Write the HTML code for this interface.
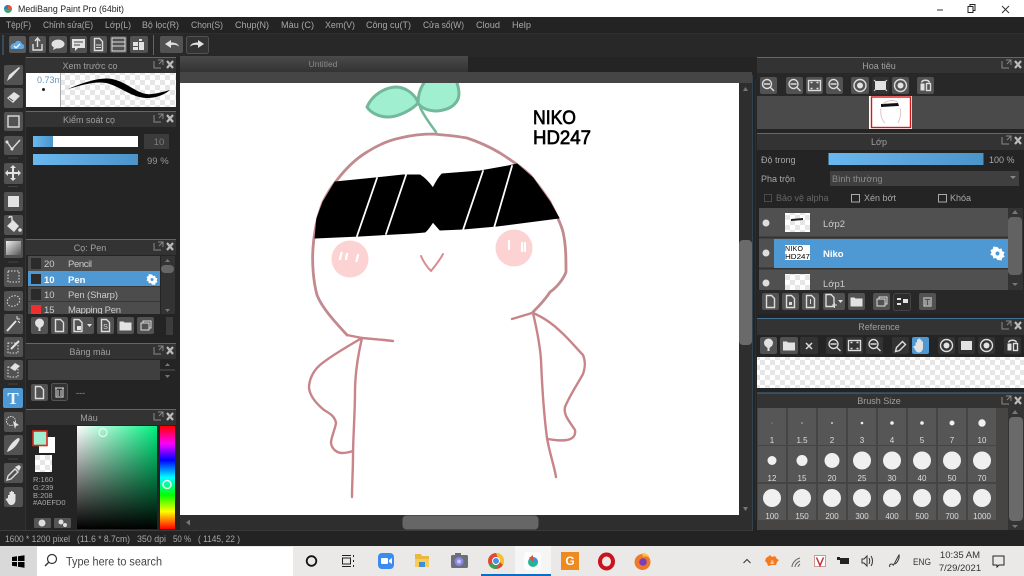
<!DOCTYPE html>
<html><head><meta charset="utf-8"><title>MediBang Paint Pro</title>
<style>
html,body{margin:0;padding:0;width:1024px;height:576px;overflow:hidden;background:#222}
svg{display:block;font-family:"Liberation Sans","Noto Sans CJK SC",sans-serif}
text{fill:#a8a8a8;font-size:9px}
.h{text-anchor:middle;fill:#a0a0a0;font-size:9px}
.b{fill:#525252}
.i{fill:none;stroke:#ddd;stroke-width:1.4}
.f{fill:#e2e2e2}
.n{text-anchor:middle;fill:#ddd;font-size:8px}
.c{fill:#f0f0f0}
.cell{fill:#565656}
</style></head><body>
<svg width="1024" height="576" viewBox="0 0 1024 576" xmlns="http://www.w3.org/2000/svg">
<defs>
<pattern id="ck" width="10" height="10" patternUnits="userSpaceOnUse"><rect width="10" height="10" fill="#fff"/><rect width="5" height="5" fill="#e6e6e6"/><rect x="5" y="5" width="5" height="5" fill="#e6e6e6"/></pattern>
<linearGradient id="bar" x1="0" x2="1"><stop offset="0" stop-color="#6ab8f0"/><stop offset="1" stop-color="#4a94c8"/></linearGradient>
<linearGradient id="sg" x1="0" x2="1"><stop offset="0" stop-color="#fff"/><stop offset="1" stop-color="#00f080"/></linearGradient>
<linearGradient id="sk" x1="0" x2="0" y1="0" y2="1"><stop offset="0" stop-color="#000" stop-opacity="0"/><stop offset="1" stop-color="#000"/></linearGradient>
<linearGradient id="hue" x1="0" x2="0" y1="0" y2="1"><stop offset="0" stop-color="#f00"/><stop offset=".17" stop-color="#f0f"/><stop offset=".33" stop-color="#00f"/><stop offset=".5" stop-color="#0ff"/><stop offset=".67" stop-color="#0f0"/><stop offset=".83" stop-color="#ff0"/><stop offset="1" stop-color="#f00"/></linearGradient>
<linearGradient id="gr" x1="0" x2="1" y1="0" y2="1"><stop offset="0" stop-color="#eee"/><stop offset="1" stop-color="#555"/></linearGradient>
<linearGradient id="tab" x1="0" x2="0" y1="0" y2="1"><stop offset="0" stop-color="#4a4a4a"/><stop offset="1" stop-color="#333"/></linearGradient>
<clipPath id="cv"><rect x="180" y="83" width="559" height="432"/></clipPath>
<clipPath id="lc"><rect x="759" y="208" width="249" height="82"/></clipPath>
<clipPath id="bc"><rect x="28" y="256" width="132" height="58"/></clipPath>
<clipPath id="pc"><rect x="26" y="73" width="34" height="34"/></clipPath>
<g id="hd"><path d="M-10-4v7h7M-6-5h5v5M-1-5L-5-1" fill="none" stroke="#888" stroke-width="1"/><path d="M3-4L9 3M9-4L3 3" stroke="#bbb" stroke-width="2.2"/></g>
<g id="doc"><path d="M-4-6h5l3 3v9h-8z" class="i"/></g>
<g id="mg"><circle cx="-1" cy="-1" r="4.500" class="i"/><path d="M2-1h-6M2 2l4 4" class="i"/></g>
<g id="fit"><rect x="-6" y="-5" width="12" height="10" class="i"/><path d="M-4-3h2M2-3h2M-4 3h2M2 3h2" class="i"/></g>
<g id="rot"><circle r="6" class="i"/><circle r="3" class="f"/></g>
<g id="cup"><circle cy="-2" r="4.500" class="f"/><path d="M-1 0h2v6h-2z" class="f"/><path d="M-4 0l4 4 4-4z" class="f"/></g>
<g id="fold"><path d="M-6-4h4l1 1h7v8h-12z" class="f"/></g>
<g id="hand"><path d="M-5 0v-3h1.500v2-5h1.500v5-6h1.500v6-5h1.500v5-3h1.500v6c0 3-2 5-4 5s-3-1-4-3l-2-3z" class="f"/></g>
<g id="flip"><rect x="-5" y="-2" width="4" height="7" class="f"/><rect x="1" y="-2" width="4" height="7" class="i"/><path d="M-4-3c1-3 7-3 8 0" class="i"/></g>
<g id="pipet"><path d="M-5 6l1-4 6-6 3 3-6 6z" class="i"/></g>
<g id="tg"><path d="M0-5l1.200 1.500 2-.3.400 2 1.900.8-.9 1.800.9 1.800-1.900.8-.4 2-2-.3L0 5l-1.200-1.500-2 .3-.4-2-1.900-.8.9-1.800-.9-1.800 1.900-.8.4-2 2 .3z" fill="#fff"/><circle r="1.500" fill="#4e99d4"/></g>
</defs>

<!-- title bar -->
<rect width="1024" height="17" fill="#fff"/>
<circle cx="8" cy="9" r="4" fill="#3aa56f"/><path d="M8 5a4 4 0 0 1 4 4H8z" fill="#e8553f"/><path d="M4 9a4 4 0 0 1 4-4v4z" fill="#2d7fc0"/>
<text x="18" y="12" style="font-size:9.500px;fill:#222" textLength="106" lengthAdjust="spacingAndGlyphs">MediBang Paint Pro (64bit)</text>
<path d="M937 10h6" stroke="#333"/><rect x="968" y="6.500" width="5" height="6" fill="none" stroke="#222"/><path d="M970 6v-1.500h5v6h-2" fill="none" stroke="#222"/>
<path d="M1002 6l7 7M1009 6l-7 7" stroke="#333"/>

<!-- menu + toolbar -->
<rect y="17" width="1024" height="16" fill="#232323"/>
<rect y="33" width="1024" height="1" fill="#2e2e2e"/>
<rect y="34" width="1024" height="23" fill="#282828"/>
<g style="font-size:9px">
<text x="6" y="28" textLength="25" lengthAdjust="spacingAndGlyphs">Tệp(F)</text>
<text x="43" y="28" textLength="50" lengthAdjust="spacingAndGlyphs">Chỉnh sửa(E)</text>
<text x="105" y="28" textLength="26" lengthAdjust="spacingAndGlyphs">Lớp(L)</text>
<text x="142" y="28" textLength="37" lengthAdjust="spacingAndGlyphs">Bộ lọc(R)</text>
<text x="191" y="28" textLength="32" lengthAdjust="spacingAndGlyphs">Chọn(S)</text>
<text x="235" y="28" textLength="34" lengthAdjust="spacingAndGlyphs">Chụp(N)</text>
<text x="281" y="28" textLength="33" lengthAdjust="spacingAndGlyphs">Màu (C)</text>
<text x="325" y="28" textLength="30" lengthAdjust="spacingAndGlyphs">Xem(V)</text>
<text x="366" y="28" textLength="45" lengthAdjust="spacingAndGlyphs">Công cụ(T)</text>
<text x="423" y="28" textLength="41" lengthAdjust="spacingAndGlyphs">Cửa sổ(W)</text>
<text x="476" y="28" textLength="24" lengthAdjust="spacingAndGlyphs">Cloud</text>
<text x="512" y="28" textLength="19" lengthAdjust="spacingAndGlyphs">Help</text>
</g>
<rect x="2.500" y="35" width="1" height="20" fill="#3f6f8f"/><rect x="153" y="35" width="1" height="20" fill="#3f6f8f"/>
<rect x="9" y="36" width="17" height="17" rx="2" fill="#5a5a5a"/><path d="M11 49c-2-4 2-6 4-6 1-3 6-3 7 1 3 0 3 5 0 5z" fill="#5ea9e6"/><path d="M14 46l2 2 4-4" stroke="#fff" fill="none" stroke-width="1.300"/>
<rect x="29" y="36" width="17" height="17" rx="2" class="b"/><path d="M33 44v6h9v-6M37.500 47v-8M35 41l2.500-3 2.500 3" class="i"/>
<rect x="49" y="36" width="18" height="17" rx="2" class="b"/><ellipse cx="58" cy="44" rx="6.500" ry="4.500" class="f"/><path d="M54 47l-1 3 4-2z" class="f"/>
<rect x="70" y="36" width="17" height="17" rx="2" class="b"/><rect x="72" y="39" width="13" height="9" class="f"/><path d="M75 48v3l3-3z" class="f"/><path d="M74 42h9M74 45h6" stroke="#444"/>
<rect x="90" y="36" width="17" height="17" rx="2" class="b"/><use href="#doc" x="98.500" y="44.500"/><path d="M96 45h5M96 47.500h5" stroke="#ddd"/>
<rect x="110" y="36" width="17" height="17" rx="2" class="b"/><rect x="112" y="38" width="13" height="13" fill="none" stroke="#ddd"/><path d="M112 42h13M112 46h13" stroke="#ddd"/>
<rect x="130" y="36" width="18" height="17" rx="2" class="b"/><path d="M133 42h5v4h-5zM133 47h5v3h-5zM139 42h5v8h-5zM139 39h3v2h-3z" class="f"/>
<rect x="160" y="36" width="23" height="17" rx="2" class="b"/><path d="M165 44l6-4v2.500c4 0 7 1 8 4-3-2-5-2-8-1.500V48z" class="f"/>
<rect x="186.500" y="36.500" width="22" height="17" rx="2" fill="#333" stroke="#525252"/><path d="M204 44l-6-4v2.500c-4 0-7 1-8 4 3-2 5-2 8-1.500V48z" class="f"/>

<!-- left background -->
<rect y="57" width="180" height="474" fill="#242424"/>
<rect x="0" y="57" width="25" height="474" fill="#282828"/>

<!-- left tools -->
<g>
<rect x="4" y="65" width="19" height="20" rx="2" class="b"/><path d="M7 81l4-3 9-10-1-1-10 8z" class="f"/>
<rect x="4" y="88" width="19" height="20" rx="2" class="b"/><path d="M7 98l7-6 6 4-7 7z" class="f"/><path d="M9 98l4 3" stroke="#4a4a4a"/>
<rect x="4" y="112" width="19" height="19" rx="2" class="b"/><rect x="8" y="116" width="11" height="11" class="i"/>
<rect x="4" y="136" width="19" height="19" rx="2" class="b"/><path d="M7 142l5 7 8-9" class="i" stroke-width="1.500"/><circle cx="7" cy="142" r="1.500" class="f"/><circle cx="12" cy="149" r="1.500" class="f"/>
<path d="M8 158h10M8 186.500h10" stroke="#444"/>
<rect x="4" y="163" width="19" height="21" rx="2" class="b"/><path d="M13 165l3 3h-2v4h4v-2l3 3-3 3v-2h-4v4h2l-3 3-3-3h2v-4h-4v2l-3-3 3-3v2h4v-4h-2z" class="f"/>
<rect x="4" y="192" width="19" height="19" rx="2" class="b"/><rect x="8" y="196" width="11" height="11" class="f"/>
<rect x="4" y="215" width="19" height="20" rx="2" class="b"/><path d="M7 226l6-6 6 6-5 6z" class="f"/><path d="M9 218c0-2 3-2 3 0v5" class="i"/><circle cx="20" cy="230" r="1.800" class="f"/>
<rect x="4" y="238" width="19" height="20" rx="2" class="b"/><rect x="6" y="241" width="15" height="14" fill="url(#gr)"/>
<path d="M8 262h10" stroke="#444"/>
<rect x="4" y="267" width="19" height="20" rx="2" class="b"/><rect x="8" y="271" width="11" height="11" fill="none" stroke="#ddd" stroke-dasharray="1.500 1.500"/>
<rect x="4" y="291" width="19" height="20" rx="2" class="b"/><ellipse cx="13.500" cy="301" rx="6.500" ry="5" fill="none" stroke="#ddd" stroke-dasharray="1.500 1.500" transform="rotate(-25 13.500 301)"/>
<rect x="4" y="314" width="19" height="20" rx="2" class="b"/><path d="M7 331l9-10" stroke="#e2e2e2" stroke-width="2"/><path d="M17 316v3M20 319h-3M20 323l-2-2" stroke="#e2e2e2"/>
<rect x="4" y="337" width="19" height="20" rx="2" class="b"/><rect x="8" y="343" width="10" height="10" fill="none" stroke="#ddd" stroke-dasharray="1.500 1.500"/><path d="M11 349l8-8" stroke="#e2e2e2" stroke-width="2"/>
<rect x="4" y="360" width="19" height="20" rx="2" class="b"/><rect x="8" y="367" width="10" height="10" fill="none" stroke="#ddd" stroke-dasharray="1.500 1.500"/><path d="M10 368l5-5 5 3-5 5z" class="f"/>
<path d="M8 384h10" stroke="#444"/>
<rect x="3" y="388" width="20" height="20" rx="2" fill="#4e99d4"/><text x="13" y="404" style="font-size:17px;font-family:'Liberation Serif',serif;font-weight:bold;fill:#f4f4f4;text-anchor:middle">T</text>
<rect x="4" y="412" width="19" height="20" rx="2" class="b"/><circle cx="11" cy="421" r="4.500" fill="none" stroke="#ddd" stroke-dasharray="1.500 1"/><path d="M13 421l6 4-3 1-1 3z" class="f"/>
<rect x="4" y="435" width="19" height="20" rx="2" class="b"/><path d="M7 452c1-5 6-11 11-14 2 0 2 2 1 3-2 4-6 9-12 11z" class="f"/>
<path d="M8 459h10" stroke="#444"/>
<rect x="4" y="463" width="19" height="20" rx="2" class="b"/><path d="M7 480l1-4 7-7 3 3-7 7z" class="i"/><path d="M15 467l4-2 2 2-2 4z" class="f"/>
<rect x="4" y="487" width="19" height="20" rx="2" class="b"/><use href="#hand" x="13" y="498"/>
</g>

<!-- preview -->
<rect x="26" y="57" width="150" height="16" fill="#333"/><rect x="26" y="57" width="150" height="1" fill="#44708f"/>
<text class="h" x="90" y="69">Xem trước cọ</text><use href="#hd" x="164" y="65"/>
<rect x="26" y="73" width="150" height="34" fill="url(#ck)"/><rect x="26" y="73" width="34" height="34" fill="#fff"/><rect x="60" y="73" width="1" height="34" fill="#aaa"/>
<g clip-path="url(#pc)"><text x="37" y="83" style="fill:#5d9bc9;font-size:9px">0.73mm</text></g>
<circle cx="43.500" cy="89.500" r="1.500" fill="#222"/>
<path d="M68 89C85 82 100 77 112 79C128 82 138 96 152 94C160 93 166 91 170 90C165 94 158 98 146 98C130 97 120 86 106 83C95 81 82 85 68 89Z" fill="#000"/>

<!-- brush control -->
<rect x="26" y="111" width="150" height="16" fill="#333"/><rect x="26" y="111" width="150" height="1" fill="#44708f"/>
<text class="h" x="89" y="123">Kiểm soát cọ</text><use href="#hd" x="164" y="119"/>
<rect x="33" y="136" width="105" height="11" fill="#fff"/><rect x="33" y="136" width="20" height="11" fill="url(#bar)"/>
<rect x="144" y="134" width="25" height="15" fill="#3b3b3b"/><text x="159" y="145" style="text-anchor:middle;fill:#7d7d7d;font-size:9.500px">10</text>
<rect x="33" y="154" width="105" height="11" fill="url(#bar)"/>
<text x="147" y="164" style="font-size:9.500px;fill:#999">99 %</text>

<!-- brush list -->
<rect x="26" y="239" width="150" height="16" fill="#333"/><rect x="26" y="239" width="150" height="1" fill="#44708f"/>
<text class="h" x="90" y="251">Cọ: Pen</text><use href="#hd" x="164" y="247"/>
<rect x="28" y="256" width="132" height="58" fill="#4c4c4c"/>
<g clip-path="url(#bc)">
<rect x="28" y="271" width="132" height="15" fill="#4e99d4"/><path d="M28 286.500h132M28 301.500h132" stroke="#383838"/>
<rect x="31" y="258" width="10" height="11" fill="#2b2b2b"/><rect x="31" y="274" width="10" height="10" fill="#2b2b2b"/><rect x="31" y="289" width="10" height="11" fill="#2b2b2b"/><rect x="31" y="305" width="10" height="11" fill="#f03030"/>
<text x="44" y="267" style="fill:#ccc;font-size:9.500px">20</text><text x="68" y="267" style="fill:#ccc;font-size:9.500px" textLength="24">Pencil</text>
<text x="44" y="283" style="fill:#fff;font-size:9.500px;font-weight:bold">10</text><text x="68" y="283" style="fill:#fff;font-size:9.500px;font-weight:bold">Pen</text>
<text x="44" y="298" style="fill:#ccc;font-size:9.500px">10</text><text x="68" y="298" style="fill:#ccc;font-size:9.500px" textLength="50">Pen (Sharp)</text>
<text x="44" y="313" style="fill:#ccc;font-size:9.500px">15</text><text x="68" y="313" style="fill:#ccc;font-size:9.500px" textLength="53">Mapping Pen</text>
</g>
<use href="#tg" x="152" y="279.500"/>
<rect x="161" y="256" width="14" height="58" fill="#333"/><rect x="161" y="265" width="13" height="8" rx="4" fill="#666"/>
<path d="M165 262l2.500-3 2.500 3zM165 309l2.500 3 2.500-3z" fill="#777"/>
<rect x="31" y="317" width="17" height="17" rx="2" class="b"/><use href="#cup" x="39.500" y="325"/>
<rect x="51" y="317" width="17" height="17" rx="2" class="b"/><use href="#doc" x="59.500" y="325.500"/>
<rect x="71" y="317" width="23" height="17" rx="2" class="b"/><use href="#doc" x="78" y="325.500"/><rect x="77" y="326" width="4" height="4" class="f"/><path d="M87 324h5l-2.500 3z" class="f"/>
<rect x="97" y="317" width="17" height="17" rx="2" class="b"/><use href="#doc" x="105.500" y="325.500"/><text x="105.500" y="329" style="font-size:7px;fill:#ddd;text-anchor:middle">S</text>
<rect x="117" y="317" width="17" height="17" rx="2" class="b"/><use href="#fold" x="125.500" y="325.500"/>
<rect x="137" y="317" width="17" height="17" rx="2" class="b"/><path d="M141 323h8v7h-8zM143 323v-2h8v7h-2" fill="none" stroke="#ddd"/>
<rect x="166" y="317" width="7" height="18" fill="#3c3c3c"/>

<!-- palette -->
<rect x="26" y="343" width="150" height="16" fill="#333"/><rect x="26" y="343" width="150" height="1" fill="#44708f"/>
<text class="h" x="90" y="355">Bảng màu</text><use href="#hd" x="164" y="351"/>
<rect x="28" y="360" width="132" height="20" fill="#3f3f3f"/>
<path d="M165 366l2.500-3 2.500 3zM165 375l2.500 3 2.500-3z" fill="#777"/><path d="M160 370h15" stroke="#555"/>
<rect x="31" y="384" width="17" height="17" rx="2" class="b"/><use href="#doc" x="39.500" y="392.500"/>
<rect x="51.500" y="383.500" width="16" height="17" rx="2" fill="#333" stroke="#555"/><path d="M55 388h9M56 388v9h7v-9M58 390v6M61 390v6" fill="none" stroke="#ddd"/>
<text x="76" y="396" style="fill:#999">---</text>

<!-- color -->
<rect x="26" y="409" width="150" height="16" fill="#333"/><rect x="26" y="409" width="150" height="1" fill="#44708f"/>
<text class="h" x="89" y="421">Màu</text><use href="#hd" x="164" y="417"/>
<rect x="39" y="437" width="16" height="16" fill="#fff"/>
<rect x="33" y="431" width="14" height="14.500" fill="#A0EFD0" stroke="#d8281c" stroke-width="1.600"/>
<rect x="35" y="455" width="17" height="17" fill="url(#ck)"/>
<g><text x="33" y="482" style="font-size:7.500px">R:160</text><text x="33" y="490" style="font-size:7.500px">G:239</text><text x="33" y="498" style="font-size:7.500px">B:208</text><text x="33" y="505" style="font-size:7.500px">#A0EFD0</text></g>
<rect x="34" y="518" width="17" height="10" rx="1" fill="#555"/><circle cx="42" cy="523" r="3.500" fill="#ddd"/>
<rect x="54" y="518" width="17" height="10" rx="1" fill="#555"/><circle cx="61" cy="522" r="2.500" fill="#ddd"/><circle cx="65" cy="525" r="2" fill="#ddd"/>
<rect x="77" y="426" width="80" height="103" fill="url(#sg)"/><rect x="77" y="426" width="80" height="103" fill="url(#sk)"/>
<rect x="160" y="426" width="15" height="103" fill="url(#hue)"/>
<circle cx="103" cy="432.500" r="4" fill="none" stroke="#dfe" stroke-width="1.200"/><circle cx="167" cy="484.500" r="4" fill="none" stroke="#e8fff0" stroke-width="1.500"/>
<path d="M25.500 57v474" stroke="#333"/>

<!-- center -->
<rect x="176" y="57" width="581" height="474" fill="#242424"/>
<rect x="180" y="56" width="288" height="16" fill="url(#tab)"/>
<text class="h" x="323" y="67" style="fill:#8a8a8a;font-size:8.500px">Untitled</text>
<rect x="180" y="72" width="572" height="11" fill="#454545"/>
<rect x="180" y="83" width="559" height="432" fill="#fff"/>
<rect x="739" y="83" width="13" height="432" fill="#2e2e2e"/>
<rect x="739" y="240" width="13" height="105" rx="4" fill="#6a6a6a"/>
<path d="M743 91l2.500-4 2.500 4zM743 507l2.500 4 2.500-4z" fill="#777"/>
<rect x="180" y="515" width="572" height="15" fill="#2e2e2e"/>
<rect x="402.500" y="515.500" width="136" height="14" rx="4" fill="#666"/>
<path d="M186 522.500l4-3v6z" fill="#777"/>
<rect y="530" width="757" height="1" fill="#3a3a3a"/>
<rect x="752.500" y="75" width="1" height="455" fill="#3f5f78"/>

<!-- drawing -->
<g clip-path="url(#cv)" fill="none" stroke-linecap="round" stroke-linejoin="round">
<path d="M367 107C372 95 385 87 397 87C408 88 416 96 418 103C412 110 398 117 388 117C378 117 370 112 367 107Z" fill="#A0EFD0" stroke="#74b89c" stroke-width="3"/>
<path d="M418 103C418 92 422 85 426 80L456 80C459 88 460 94 458 99C455 106 448 110 437 111C428 111 421 108 418 103Z" fill="#A0EFD0" stroke="#74b89c" stroke-width="3"/>
<path d="M420 107C423 114 430 124 436 132" stroke="#74b89c" stroke-width="2.500"/>
<path d="M347 335C335 322 322 308 317 295C313 280 312 262 313 248C314 232 318 215 323 202C328 192 332 186 337 180C347 167 357 158 367 152C378 145 390 140 400 138C412 135 423 134 433 134C445 135 456 136 467 138C479 142 490 147 500 153C511 160 521 167 530 175C538 185 545 194 550 202C556 214 561 224 563 232C566 245 566 258 566 272C563 280 556 288 550 292C545 300 538 307 533 312" stroke="#c08a8e" stroke-width="2.800"/>
<path d="M335 182L375 178L403 175L420 175C425 178 430 184 433 188C436 182 439 177 442 174L480 171L508 166L517 164L533 178L550 202L559 218L497 226L463 229L440 230L433 222C430 226 428 230 425 232L413 233L360 236L315 238C316 230 316 224 317 218L323 202Z" fill="#000" stroke="#000"/>
<path d="M377 178L357 236M406 175L386 234M483 171L463 230M512 166L494 228" stroke="#fff" stroke-width="1.800"/>
<circle cx="350" cy="259" r="18.500" fill="#fcd2d2"/><circle cx="514" cy="248" r="18.500" fill="#fcd2d2"/>
<path d="M341.500 253L340 259M347 254L346 259M358 255L356.500 261" stroke="#fff" stroke-width="2.400"/>
<path d="M509 241V249M522 243V251M525 243V251" stroke="#fff" stroke-width="2.200"/>
<path d="M421 256C424 263 428 268 431 271C435 266 440 260 443 254" stroke="#d98d90" stroke-width="2"/>
<g stroke="#c88488" stroke-width="2.400">
<path d="M347 335L362 338L384 340L393 341"/>
<path d="M362 338C358 355 355 375 355 392C355 412 353 440 353 455C353 470 352 485 352 497"/>
<path d="M362 338C350 345 332 355 320 365C312 372 309 381 309 388C310 397 318 405 324 410C331 414 335 417 336 423C335 430 331 437 331 443C332 450 338 453 342 453C347 453 350 452 353 451"/>
<path d="M512 319L532 313"/>
<path d="M533 313C537 330 540 345 541 360C542 385 544 415 547 438C550 455 554 465 556 477"/>
<path d="M533 313C545 318 555 326 560 331C570 340 576 348 583 355C586 362 585 368 583 374C577 385 570 395 565 407C563 415 570 422 575 430C576 436 572 439 567 440C560 441 554 440 548 439"/>
</g>
</g>
<text x="533" y="124" style="font-size:19.500px;fill:#000;stroke:#000;stroke-width:.7" textLength="43" lengthAdjust="spacingAndGlyphs">NIKO</text>
<text x="533" y="144" style="font-size:19.500px;fill:#000;stroke:#000;stroke-width:.7" textLength="58" lengthAdjust="spacingAndGlyphs">HD247</text>

<!-- right panels -->
<rect x="753" y="57" width="271" height="474" fill="#242424"/>
<rect x="755" y="80" width="1" height="440" fill="#2e2e2e"/>
<!-- navigator -->
<rect x="757" y="57" width="267" height="16" fill="#333"/><rect x="757" y="57" width="267" height="1" fill="#44708f"/>
<text class="h" x="879" y="69">Hoa tiêu</text><use href="#hd" x="1012" y="65"/>
<rect x="757" y="73" width="267" height="23" fill="#282828"/>
<g>
<rect x="760" y="77" width="17" height="17" rx="2" class="b"/><use href="#mg" x="768" y="85"/>
<rect x="786" y="77" width="17" height="17" rx="2" class="b"/><use href="#mg" x="794.500" y="85"/>
<rect x="806" y="77" width="17" height="17" rx="2" class="b"/><use href="#fit" x="814.500" y="85.500"/>
<rect x="826" y="77" width="17" height="17" rx="2" class="b"/><use href="#mg" x="834.500" y="85"/>
<rect x="851" y="77" width="18" height="17" rx="2" class="b"/><use href="#rot" x="860" y="85.500"/>
<rect x="872" y="77" width="17" height="17" rx="2" fill="#333"/><path d="M875 81h11v9h-11z" class="f"/><path d="M874 80l3 3M887 80l-3 3M874 91l3-3M887 91l-3-3" stroke="#ddd"/>
<rect x="892" y="77" width="17" height="17" rx="2" class="b"/><use href="#rot" x="900.500" y="85.500"/>
<rect x="917" y="77" width="17" height="17" rx="2" class="b"/><use href="#flip" x="925.500" y="85.500"/>
</g>
<rect x="757" y="96" width="267" height="33" fill="#4a4a4a"/>
<rect x="869" y="96" width="43" height="33" fill="#fff"/><rect x="871.500" y="97" width="39" height="30.500" fill="#fff" stroke="#d81818" stroke-width="1.400"/>
<path d="M881 104l17-1 1 3-18 1z" fill="#111"/><path d="M881 108c-1 7 1 12 4 15M900 108c2 6 0 11-2 15M883 104c4-4 12-5 15-1" stroke="#e3c4c6" fill="none"/>

<!-- layer -->
<rect x="757" y="133" width="267" height="17" fill="#333"/><rect x="757" y="133" width="267" height="1" fill="#44708f"/>
<text class="h" x="879" y="145">Lớp</text><use href="#hd" x="1012" y="141"/>
<text x="761" y="163" style="font-size:9px">Độ trong</text>
<rect x="828.500" y="153" width="155" height="12" fill="url(#bar)"/>
<text x="989" y="163" style="font-size:9px">100 %</text>
<text x="761" y="182" style="font-size:9px">Pha trộn</text>
<rect x="830" y="171" width="189" height="15" fill="#3f3f3f"/>
<text x="832" y="182" style="fill:#8a8a8a">Bình thường</text><path d="M1010 176h6l-3 3z" fill="#888"/>
<rect x="764.500" y="194.500" width="7" height="7" fill="none" stroke="#4a4a4a"/><text x="776" y="201" style="fill:#666">Bảo vệ alpha</text>
<rect x="851.500" y="194.500" width="8" height="7.500" fill="none" stroke="#aaa"/><text x="864" y="201">Xén bớt</text>
<rect x="938.500" y="194.500" width="8" height="7.500" fill="none" stroke="#aaa"/><text x="950" y="201">Khóa</text>

<rect x="759" y="208" width="249" height="82" fill="#505050"/>
<g clip-path="url(#lc)">
<path d="M759 237.500h249M759 268.500h249" stroke="#333" stroke-width="2"/>
<rect x="774" y="239" width="234" height="29" fill="#4e99d4"/>
<circle cx="766" cy="223" r="3.500" fill="#ddd"/><circle cx="766" cy="253" r="3.500" fill="#ddd"/><circle cx="766" cy="283" r="3.500" fill="#ddd"/>
<rect x="785" y="213" width="25" height="19" fill="url(#ck)"/><path d="M791 219l12-1v2l-12 1z" fill="#222"/>
<rect x="785" y="245" width="25" height="15" fill="#fff"/>
<text x="785" y="251" style="font-size:7px;fill:#000" textLength="18">NIKO</text><text x="785" y="259" style="font-size:7.500px;fill:#000" textLength="25" lengthAdjust="spacingAndGlyphs">HD247</text>
<rect x="785" y="274" width="25" height="19" fill="url(#ck)"/>
<text x="823" y="227" style="font-size:9.500px;fill:#ccc">Lớp2</text>
<text x="823" y="257" style="font-size:9.500px;fill:#fff;font-weight:bold">Niko</text>
<text x="823" y="287" style="font-size:9.500px;fill:#ccc">Lớp1</text>
</g>
<g transform="translate(997.500 253.500) scale(1.300)"><use href="#tg"/></g>
<rect x="1008" y="208" width="15" height="82" fill="#333"/><rect x="1008" y="217" width="14" height="58" rx="4" fill="#626262"/>
<path d="M1012 214l3-4 3 4zM1012 283l3 3 3-3z" fill="#777"/>
<!-- layer toolbar -->
<rect x="757" y="290" width="267" height="24" fill="#282828"/>
<rect x="762" y="293" width="17" height="17" rx="2" class="b"/><use href="#doc" x="770.500" y="301.500"/>
<rect x="782" y="293" width="17" height="17" rx="2" class="b"/><use href="#doc" x="790.500" y="301.500"/><rect x="789" y="302" width="3" height="3" fill="#ddd"/>
<rect x="802" y="293" width="17" height="17" rx="2" class="b"/><use href="#doc" x="810.500" y="301.500"/><path d="M810.500 299v5" stroke="#ddd"/>
<rect x="823" y="293" width="22" height="17" rx="2" class="b"/><use href="#doc" x="830" y="300.500"/><path d="M832 305h5M834.500 303v5" stroke="#ddd"/><path d="M838 300h5l-2.500 3z" class="f"/>
<rect x="848" y="293" width="17" height="17" rx="2" class="b"/><use href="#fold" x="856.500" y="301.500"/>
<rect x="873" y="293" width="17" height="17" rx="2" class="b"/><path d="M877 299h8v7h-8zM879 299v-2h8v7h-2" fill="none" stroke="#ddd"/>
<rect x="893.500" y="293.500" width="17" height="17" rx="2" fill="#2c2c2c" stroke="#444"/><path d="M897 298h4v2h-4zM897 303h4v2h-4zM903 299h5v4h-5z" class="f"/>
<rect x="919" y="293" width="17" height="17" rx="2" class="b"/><path d="M923 298h9M924 299v7h7v-7M926 300v5M929 300v5" fill="none" stroke="#ddd"/>

<!-- reference -->
<rect x="757" y="318" width="267" height="17" fill="#333"/><rect x="757" y="318" width="267" height="1" fill="#44708f"/>
<text class="h" x="879" y="330">Reference</text><use href="#hd" x="1012" y="326"/>
<rect x="760" y="337" width="17" height="17" rx="2" class="b"/><use href="#cup" x="768.500" y="345"/>
<rect x="780" y="337" width="18" height="17" rx="2" class="b"/><use href="#fold" x="789" y="345.500"/>
<rect x="800" y="337" width="18" height="17" rx="2" fill="#333"/><path d="M806 343l6 6M812 343l-6 6" stroke="#ddd" stroke-width="1.500"/>
<rect x="826" y="337" width="17" height="17" rx="2" fill="#333"/><use href="#mg" x="834.500" y="345"/>
<rect x="846" y="337" width="17" height="17" rx="2" fill="#333"/><use href="#fit" x="854.500" y="345.500"/>
<rect x="866" y="337" width="17" height="17" rx="2" fill="#333"/><use href="#mg" x="874.500" y="345"/>
<rect x="892" y="337" width="17" height="17" rx="2" fill="#333"/><use href="#pipet" x="900.500" y="345.500"/>
<rect x="912" y="337" width="17" height="17" rx="2" fill="#4e99d4"/><use href="#hand" x="920.500" y="345.500"/>
<rect x="938" y="337" width="17" height="17" rx="2" fill="#333"/><use href="#rot" x="946.500" y="345.500"/>
<rect x="958" y="337" width="17" height="17" rx="2" fill="#333"/><path d="M961 341h11v9h-11z" class="f"/>
<rect x="978" y="337" width="17" height="17" rx="2" fill="#333"/><use href="#rot" x="986.500" y="345.500"/>
<rect x="1004" y="337" width="17" height="17" rx="2" fill="#333"/><use href="#flip" x="1012.500" y="345.500"/>
<rect x="757" y="357" width="267" height="31" fill="url(#ck)"/>

<!-- brush size -->
<rect x="757" y="393" width="267" height="15" fill="#333"/><rect x="757" y="392.500" width="267" height="1" fill="#44708f"/>
<text class="h" x="879" y="404">Brush Size</text><use href="#hd" x="1012" y="401"/>
<rect x="757" y="408" width="251" height="122" fill="#474543"/>
<g>
<rect x="758" y="408" width="28" height="37" class="cell"/><rect x="788" y="408" width="28" height="37" class="cell"/><rect x="818" y="408" width="28" height="37" class="cell"/><rect x="848" y="408" width="28" height="37" class="cell"/><rect x="878" y="408" width="28" height="37" class="cell"/><rect x="908" y="408" width="28" height="37" class="cell"/><rect x="938" y="408" width="28" height="37" class="cell"/><rect x="968" y="408" width="28" height="37" class="cell"/>
<rect x="758" y="446" width="28" height="36" class="cell"/><rect x="788" y="446" width="28" height="36" class="cell"/><rect x="818" y="446" width="28" height="36" class="cell"/><rect x="848" y="446" width="28" height="36" class="cell"/><rect x="878" y="446" width="28" height="36" class="cell"/><rect x="908" y="446" width="28" height="36" class="cell"/><rect x="938" y="446" width="28" height="36" class="cell"/><rect x="968" y="446" width="28" height="36" class="cell"/>
<rect x="758" y="484" width="28" height="36" class="cell"/><rect x="788" y="484" width="28" height="36" class="cell"/><rect x="818" y="484" width="28" height="36" class="cell"/><rect x="848" y="484" width="28" height="36" class="cell"/><rect x="878" y="484" width="28" height="36" class="cell"/><rect x="908" y="484" width="28" height="36" class="cell"/><rect x="938" y="484" width="28" height="36" class="cell"/><rect x="968" y="484" width="28" height="36" class="cell"/>
</g>
<g>
<circle cx="772" cy="423" r=".4" class="c"/><circle cx="802" cy="423" r=".6" class="c"/><circle cx="832" cy="423" r=".9" class="c"/><circle cx="862" cy="423" r="1.300" class="c"/><circle cx="892" cy="423" r="1.800" class="c"/><circle cx="922" cy="423" r="1.800" class="c"/><circle cx="952" cy="423" r="2.500" class="c"/><circle cx="982" cy="423" r="3.700" class="c"/>
<circle cx="772" cy="460.500" r="4.500" class="c"/><circle cx="802" cy="460.500" r="5.500" class="c"/><circle cx="832" cy="460.500" r="7.500" class="c"/><circle cx="862" cy="460.500" r="9" class="c"/><circle cx="892" cy="460.500" r="9" class="c"/><circle cx="922" cy="460.500" r="9" class="c"/><circle cx="952" cy="460.500" r="9" class="c"/><circle cx="982" cy="460.500" r="9" class="c"/>
<circle cx="772" cy="498" r="9" class="c"/><circle cx="802" cy="498" r="9" class="c"/><circle cx="832" cy="498" r="9" class="c"/><circle cx="862" cy="498" r="9" class="c"/><circle cx="892" cy="498" r="9" class="c"/><circle cx="922" cy="498" r="9" class="c"/><circle cx="952" cy="498" r="9" class="c"/><circle cx="982" cy="498" r="9" class="c"/>
</g>
<text class="n" x="772" y="443">1</text><text class="n" x="802" y="443">1.5</text><text class="n" x="832" y="443">2</text><text class="n" x="862" y="443">3</text><text class="n" x="892" y="443">4</text><text class="n" x="922" y="443">5</text><text class="n" x="952" y="443">7</text><text class="n" x="982" y="443">10</text>
<text class="n" x="772" y="481">12</text><text class="n" x="802" y="481">15</text><text class="n" x="832" y="481">20</text><text class="n" x="862" y="481">25</text><text class="n" x="892" y="481">30</text><text class="n" x="922" y="481">40</text><text class="n" x="952" y="481">50</text><text class="n" x="982" y="481">70</text>
<text class="n" x="772" y="519">100</text><text class="n" x="802" y="519">150</text><text class="n" x="832" y="519">200</text><text class="n" x="862" y="519">300</text><text class="n" x="892" y="519">400</text><text class="n" x="922" y="519">500</text><text class="n" x="952" y="519">700</text><text class="n" x="982" y="519">1000</text>
<rect x="1008" y="408" width="16" height="122" fill="#333"/><rect x="1009" y="417" width="14" height="104" rx="4" fill="#6a6a6a"/>
<path d="M1012 414l3-4 3 4zM1012 525l3 3 3-3z" fill="#777"/>

<!-- status -->
<rect y="531" width="1024" height="15" fill="#232323"/>
<g>
<text x="5" y="542" style="font-size:9.500px" textLength="65" lengthAdjust="spacingAndGlyphs">1600 * 1200 pixel</text>
<text x="77" y="542" style="font-size:9.500px" textLength="53" lengthAdjust="spacingAndGlyphs">(11.6 * 8.7cm)</text>
<text x="137" y="542" style="font-size:9.500px" textLength="29" lengthAdjust="spacingAndGlyphs">350 dpi</text>
<text x="173" y="542" style="font-size:9.500px" textLength="18" lengthAdjust="spacingAndGlyphs">50 %</text>
<text x="198" y="542" style="font-size:9.500px" textLength="42" lengthAdjust="spacingAndGlyphs">( 1145, 22 )</text>
</g>

<!-- taskbar -->
<rect y="546" width="1024" height="30" fill="#ebe9e7"/>
<rect width="37" y="546" height="30" fill="#d9d9d9"/>
<path d="M12 557l5-.7V561h-5zM18 556.200l6.500-1V561H18zM12 562h5v4.500l-5-.7zM18 562h6.500v5.700l-6.500-.9z" fill="#000"/>
<rect x="37" y="547" width="256" height="29" fill="#fff"/>
<circle cx="52" cy="559" r="4.500" fill="none" stroke="#333" stroke-width="1.200"/><path d="M48.500 562.500L45 566" stroke="#333" stroke-width="1.400"/>
<text x="66" y="565.500" style="font-size:11.500px;fill:#444" textLength="96" lengthAdjust="spacingAndGlyphs">Type here to search</text>
<circle cx="311.500" cy="561" r="4.800" fill="none" stroke="#111" stroke-width="1.800"/>
<path d="M342 555.500h9M342 566.500h9" stroke="#222"/><rect x="342.500" y="558" width="8" height="6" fill="none" stroke="#222"/><path d="M353.500 555v2M353.500 560v2M353.500 565v2" stroke="#222"/>
<rect x="378" y="553" width="16" height="16" rx="4" fill="#3c8cf0"/><rect x="381" y="558" width="7" height="6" rx="1" fill="#fff"/><path d="M389 560l3-2v6l-3-2z" fill="#fff"/>
<path d="M415 554h6l1 2h7v3h-14z" fill="#e8b93e"/><path d="M415 559h14v8h-14z" fill="#f6cd58"/><path d="M419 562h6v5h-6z" fill="#3d8fd6"/>
<rect x="451" y="555" width="17" height="13" rx="1.500" fill="#6a7078"/><rect x="455" y="553" width="6" height="3" fill="#6a7078"/><circle cx="459" cy="561.500" r="4.500" fill="#8c86e8"/><circle cx="459" cy="561.500" r="2" fill="#c9c6f7"/>
<circle cx="496" cy="561" r="8" fill="#e0483a"/><path d="M496 561l-7 4a8 8 0 0 0 7 4l4-7z" fill="#38a352"/><path d="M496 553a8 8 0 0 1 7 12l-4-4z" fill="#f3c22d"/><circle cx="496" cy="561" r="3.500" fill="#4d8fe6" stroke="#fff"/>
<rect x="515" y="546" width="36" height="30" fill="#f5f5f5"/>
<rect x="524" y="552" width="17" height="18" rx="3" fill="#fdfdfd"/><circle cx="533" cy="562" r="5" fill="#26b39c"/><path d="M533 557a5 5 0 0 1 5 5h-5z" fill="#3c92e0"/><path d="M529 558l4-3v7z" fill="#e0503a"/>
<rect x="481" y="574" width="34" height="2" fill="#0a6fc4"/><rect x="515" y="574" width="36" height="2" fill="#0a6fc4"/>
<rect x="561" y="552" width="18" height="18" fill="#ee8a20"/><text x="570" y="565" style="font-size:12px;font-weight:bold;fill:#fff;text-anchor:middle">G</text>
<ellipse cx="606.500" cy="561.500" rx="6.500" ry="7" fill="none" stroke="#c8141e" stroke-width="4"/>
<circle cx="642.500" cy="562" r="8" fill="#f0782a"/><circle cx="643" cy="562" r="3.800" fill="#7a3fb8"/><path d="M642 553c4 0 7 2 8 6-2-3-5-3-7-2z" fill="#fcc23a"/>

<path d="M743.500 563l3.500-3.500 3.500 3.500" fill="none" stroke="#333"/>
<path d="M766 558l3-2 1-1 2 2 3-1 2 3 2 1-2 2-1 3-4 0-4 1-1-3-2-2z" fill="#f5791f"/><text x="772" y="564" style="font-size:6px;fill:#fff;text-anchor:middle">a</text>
<path d="M792 567c0-4 4-8 8-9M795 567c0-3 3-5 5-6M798 567c0-1 1-2 2-3" fill="none" stroke="#666"/>
<rect x="814.500" y="555.500" width="11" height="11" fill="#fff" stroke="#c99"/><path d="M816.500 557.500l3.500 8 3.500-8" fill="none" stroke="#c0282c" stroke-width="1.400"/>
<rect x="840" y="558" width="9" height="6" fill="#222"/><path d="M837 557h3v3h-3z" fill="#222"/>
<path d="M862 559h2l3-3v10l-3-3h-2z" fill="none" stroke="#333"/><path d="M869 558c1 2 1 4 0 6M871 556c2 3 2 7 0 10" fill="none" stroke="#333"/>
<path d="M890 567c-2-3 3-4 3-2s4-7 6-10c1 3-2 8-4 9" fill="none" stroke="#333"/>
<text x="913" y="565" style="font-size:9.500px;fill:#333" textLength="18" lengthAdjust="spacingAndGlyphs">ENG</text>
<text x="960" y="558" style="font-size:9.500px;fill:#333;text-anchor:middle">10:35 AM</text>
<text x="960" y="571" style="font-size:9.500px;fill:#333;text-anchor:middle">7/29/2021</text>
<path d="M993 556h11v9h-5l-2 2v-2h-4z" fill="none" stroke="#222"/>
</svg>
</body></html>
